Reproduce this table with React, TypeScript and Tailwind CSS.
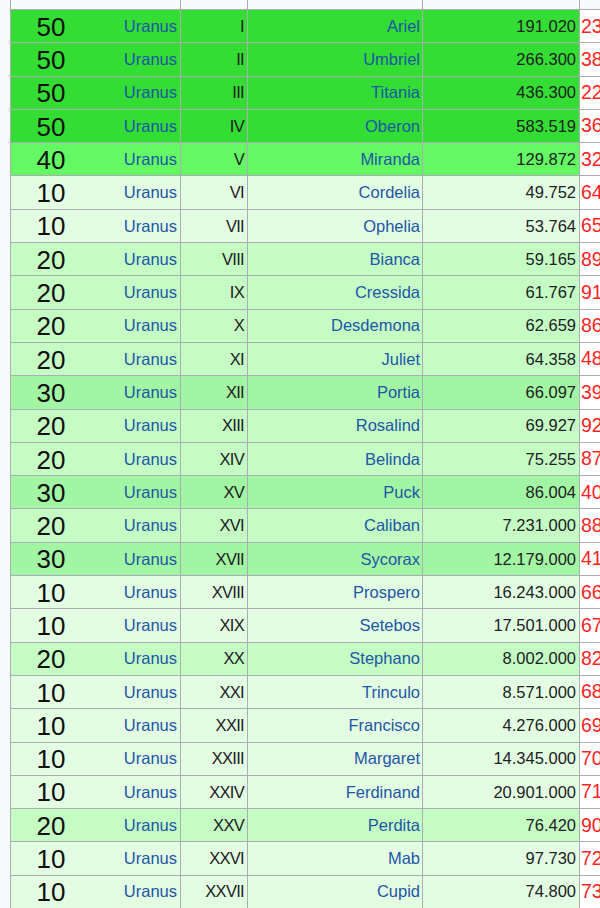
import React from 'react'

type Moon = [number, string, string, string, number]

const moons: Moon[] = [
    [50, 'I', 'Ariel', '191.020', 23],
    [50, 'II', 'Umbriel', '266.300', 38],
    [50, 'III', 'Titania', '436.300', 22],
    [50, 'IV', 'Oberon', '583.519', 36],
    [40, 'V', 'Miranda', '129.872', 32],
    [10, 'VI', 'Cordelia', '49.752', 64],
    [10, 'VII', 'Ophelia', '53.764', 65],
    [20, 'VIII', 'Bianca', '59.165', 89],
    [20, 'IX', 'Cressida', '61.767', 91],
    [20, 'X', 'Desdemona', '62.659', 86],
    [20, 'XI', 'Juliet', '64.358', 48],
    [30, 'XII', 'Portia', '66.097', 39],
    [20, 'XIII', 'Rosalind', '69.927', 92],
    [20, 'XIV', 'Belinda', '75.255', 87],
    [30, 'XV', 'Puck', '86.004', 40],
    [20, 'XVI', 'Caliban', '7.231.000', 88],
    [30, 'XVII', 'Sycorax', '12.179.000', 41],
    [10, 'XVIII', 'Prospero', '16.243.000', 66],
    [10, 'XIX', 'Setebos', '17.501.000', 67],
    [20, 'XX', 'Stephano', '8.002.000', 82],
    [10, 'XXI', 'Trinculo', '8.571.000', 68],
    [10, 'XXII', 'Francisco', '4.276.000', 69],
    [10, 'XXIII', 'Margaret', '14.345.000', 70],
    [10, 'XXIV', 'Ferdinand', '20.901.000', 71],
    [20, 'XXV', 'Perdita', '76.420', 90],
    [10, 'XXVI', 'Mab', '97.730', 72],
    [10, 'XXVII', 'Cupid', '74.800', 73],
]

const rowBg: Record<number, string> = {
    50: 'bg-[#33dd33]',
    40: 'bg-[#64f864]',
    30: 'bg-[#a2f5a2]',
    20: 'bg-[#c4fcc4]',
    10: 'bg-[#e3fde3]',
}

const MoonRow = ({ moon }: { moon: Moon }) => {
    const [score, roman, name, dist, rank] = moon
    return (
        <div className="flex h-[33.3px] border-b border-[#a8aeb3]">
            <div className={`flex w-[170px] shrink-0 items-center justify-between border-r border-[#a8aeb3] pr-[3px] ${rowBg[score]}`}>
                <span className="w-[80px] pt-[2px] text-center text-[26px] text-[#101010]">{score}</span>
                <span className="text-[16.5px] text-[#1d56a6]">Uranus</span>
            </div>
            <div className={`flex w-[67px] shrink-0 items-center justify-end border-r border-[#a8aeb3] pr-[3px] ${rowBg[score]}`}>
                <span className="text-[16.5px] tracking-[-0.7px] text-[#202122]">{roman}</span>
            </div>
            <div className={`flex w-[175px] shrink-0 items-center justify-end border-r border-[#a8aeb3] pr-[2px] ${rowBg[score]}`}>
                <span className="text-[16.5px] text-[#1d56a6]">{name}</span>
            </div>
            <div className={`flex w-[157px] shrink-0 items-center justify-end border-r border-[#a8aeb3] pr-[3px] ${rowBg[score]}`}>
                <span className="text-[16.5px] text-[#202122]">{dist}</span>
            </div>
            <div className="flex w-[60px] shrink-0 items-center bg-white pl-[1px]">
                <span className="text-[19.5px] text-[#ff1f1f]">{rank}</span>
            </div>
        </div>
    )
}

const App = () => {
    return (
        <div className="h-[908px] w-[600px] overflow-hidden bg-[#f8f9fa] pl-[10px] font-['Liberation_Sans',Arial,sans-serif]">
            <div className="flex w-[640px] flex-col border-l border-[#a8aeb3]">
                <div className="flex h-[10px] border-b border-[#a8aeb3]">
                    <div className="w-[170px] shrink-0 border-r border-[#a8aeb3] bg-[#f8f9fa]" />
                    <div className="w-[67px] shrink-0 border-r border-[#a8aeb3] bg-[#f8f9fa]" />
                    <div className="w-[175px] shrink-0 border-r border-[#a8aeb3] bg-[#f8f9fa]" />
                    <div className="w-[157px] shrink-0 border-r border-[#a8aeb3] bg-[#f8f9fa]" />
                    <div className="w-[60px] shrink-0 bg-[#f8f9fa]" />
                </div>
                {moons.map((moon) => (
                    <MoonRow key={moon[2]} moon={moon} />
                ))}
            </div>
        </div>
    )
}

export default App
